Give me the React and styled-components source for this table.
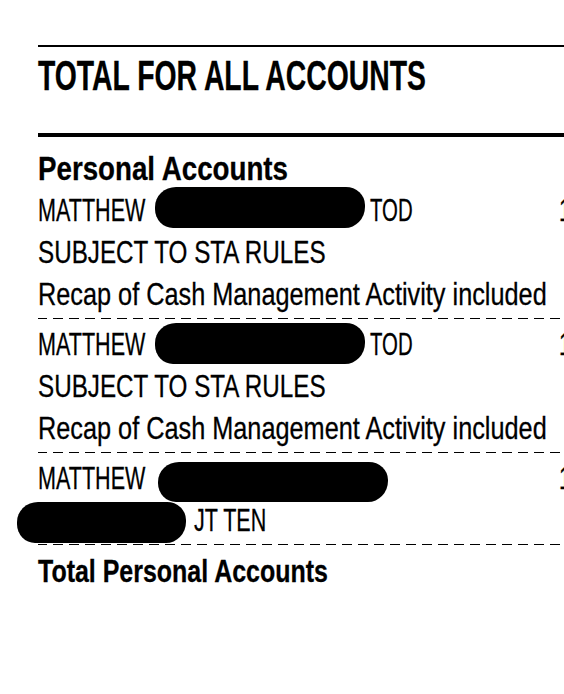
import React from 'react';
import styled, { createGlobalStyle } from 'styled-components';

const GlobalStyle = createGlobalStyle`
  html, body {
    margin: 0;
    padding: 0;
    background: #ffffff;
    overflow: hidden;
  }
  body {
    font-family: "Liberation Sans", Arial, sans-serif;
    color: #000000;
  }
`;

// text pieces: k = horizontal squeeze to mimic the condensed statement face
const accounts = [
  {
    lines: [
      { parts: [{ text: 'MATTHEW', k: 0.674, w: 117 }, { blob: 210, top: -2, after: 5 }, { text: 'TOD', k: 0.636 }], value: '1' },
      { parts: [{ text: 'SUBJECT TO STA RULES', k: 0.757 }] },
      { parts: [{ text: 'Recap of Cash Management Activity included', k: 0.79 }] },
    ],
  },
  {
    lines: [
      { parts: [{ text: 'MATTHEW', k: 0.674, w: 117 }, { blob: 210, top: 0, after: 5 }, { text: 'TOD', k: 0.636 }], value: '1' },
      { parts: [{ text: 'SUBJECT TO STA RULES', k: 0.757 }] },
      { parts: [{ text: 'Recap of Cash Management Activity included', k: 0.79 }] },
    ],
  },
  {
    lines: [
      { parts: [{ text: 'MATTHEW', k: 0.674, w: 120 }, { blob: 230, top: 5, h: 40 }], value: '1' },
      { parts: [{ blob: 169, top: 3, lead: -21, after: 8 }, { text: 'JT TEN', k: 0.673 }] },
    ],
  },
];

const App = () => {
  return (
    <Page>
      <GlobalStyle />
      <Sheet>
        <TopRule />
        <Heading>
          <Squeeze k={0.675}>TOTAL FOR ALL ACCOUNTS</Squeeze>
        </Heading>
        <HeavyRule />
        <SectionTitle>
          <Squeeze k={0.815}>Personal Accounts</Squeeze>
        </SectionTitle>
        {accounts.map((account, i) => (
          <AccountGroup key={i} first={i === 0}>
            {account.lines.map((line, j) => (
              <Line key={j}>
                <Name>
                  {line.parts.map((part, k) =>
                    part.text ? (
                      <Cell key={k} w={part.w}>
                        <Squeeze k={part.k}>{part.text}</Squeeze>
                      </Cell>
                    ) : (
                      <Blob
                        key={k}
                        w={part.blob}
                        h={part.h}
                        top={part.top}
                        lead={part.lead}
                        after={part.after}
                      />
                    )
                  )}
                </Name>
                <Value>
                  {line.value && <Squeeze k={0.67}>{line.value}</Squeeze>}
                </Value>
              </Line>
            ))}
          </AccountGroup>
        ))}
        <TotalTitle>
          <Squeeze k={0.78}>Total Personal Accounts</Squeeze>
        </TotalTitle>
      </Sheet>
    </Page>
  );
};

const Page = styled.div`
  width: 564px;
  height: 694px;
  overflow: hidden;
`;

const Sheet = styled.div`
  width: 700px;
  padding-left: 38px;
  padding-top: 45px;
`;

const Squeeze = styled.span`
  display: inline-block;
  white-space: nowrap;
  transform: scaleX(${(p) => p.k});
  transform-origin: left center;
  -webkit-text-stroke: 0.3px #000;
`;

const TopRule = styled.div`
  height: 2px;
  background: #000;
`;

const Heading = styled.h1`
  margin: 0;
  height: 86px;
  padding-top: 8px;
  box-sizing: border-box;
  font-size: 42px;
  line-height: 42px;
  font-weight: bold;
`;

const HeavyRule = styled.div`
  height: 4px;
  background: #000;
`;

const SectionTitle = styled.h2`
  margin: 0;
  padding-top: 13px;
  font-size: 34px;
  line-height: 36px;
  font-weight: bold;
`;

const AccountGroup = styled.div`
  padding-top: ${(p) => (p.first ? '3px' : '4px')};
  padding-bottom: 3px;
  border-bottom: 1px solid #000;
  border-image: repeating-linear-gradient(90deg, #000 0 10px, transparent 10px 16px) 1;
`;

const Line = styled.div`
  display: flex;
  height: 42px;
  font-size: 32px;
  line-height: 42px;
`;

const Name = styled.div`
  width: 521px;
  display: flex;
  align-items: flex-start;
`;

const Cell = styled.span`
  display: inline-block;
  flex: none;
  width: ${(p) => (p.w ? `${p.w}px` : 'auto')};
  white-space: nowrap;
`;

const Value = styled.div`
  flex: 1;
`;

const Blob = styled.span`
  display: inline-block;
  flex: none;
  width: ${(p) => p.w}px;
  height: ${(p) => p.h || 41}px;
  margin-top: ${(p) => p.top || 0}px;
  margin-left: ${(p) => p.lead || 0}px;
  margin-right: ${(p) => p.after || 0}px;
  background: #000;
  border-radius: 21px 19px 20px 18px / 20px 18px 21px 19px;
`;

const TotalTitle = styled.h2`
  margin: 0;
  padding-top: 8px;
  font-size: 32px;
  line-height: 36px;
  font-weight: bold;
`;

export default App;
